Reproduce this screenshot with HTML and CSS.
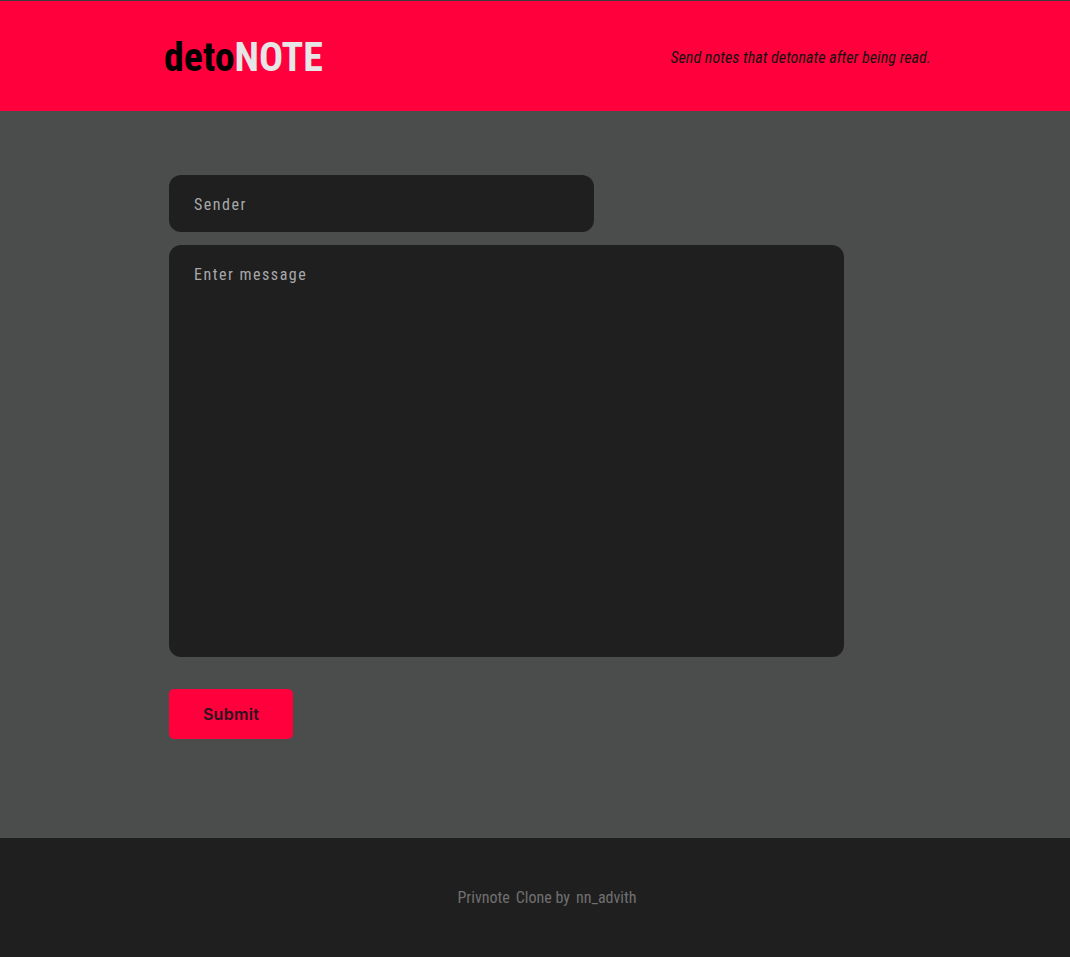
FILE: index.html
```html
<!DOCTYPE html>
<html>
<head>
<meta charset="utf-8">
<link rel="stylesheet" href="styles.css">
</head>
<body>
<header class="header">
  <div class="logo"><span class="logo-a">deto</span><span class="logo-b">NOTE</span></div>
  <div class="tagline">Send notes that detonate after being read.</div>
</header>
<main class="main">
  <form class="form">
    <input class="sender" type="text" placeholder="Sender">
    <textarea class="message" placeholder="Enter message"></textarea>
    <button class="submit" type="button">Submit</button>
  </form>
</main>
<footer class="footer">
  <span>Privnote</span><span>Clone by</span><span>nn_advith</span>
</footer>
</body>
</html>
```

FILE: styles.css
```css
* { box-sizing: border-box; }
html, body { margin: 0; padding: 0; }
body {
  font-family: "Roboto Condensed", "Liberation Sans Narrow", Roboto, sans-serif;
  background: #4b4d4c;
  border-top: 1px solid #3a3c3d;
}
.header {
  background: #ff003c;
  height: 110px;
  display: flex;
  align-items: center;
  justify-content: space-between;
  padding: 0 139px 0 164px;
}
.logo {
  font-weight: 700;
  font-size: 40px;
  letter-spacing: 0;
  margin-top: 2px;
}
.logo-a { color: #000; }
.logo-b { color: #e6e6e6; }
.tagline {
  font-style: italic;
  font-size: 16px;
  letter-spacing: 0.05px;
  color: #111;
  margin-top: 3px;
}
.main {
  height: 727px;
  padding: 64px 0 0 169px;
}
.form { display: flex; flex-direction: column; align-items: flex-start; }
.sender, .message {
  background: #1f1f1f;
  border: none;
  border-radius: 12px;
  color: #ddd;
  font-family: inherit;
  font-size: 16px;
  letter-spacing: 1.5px;
  outline: none;
  padding: 0 25px;
}
.sender::placeholder, .message::placeholder { color: #a8a8ab; }
.sender { width: 425px; height: 57px; padding-top: 2px; }
.message {
  width: 675px;
  height: 412px;
  margin-top: 13px;
  padding-top: 20px;
  resize: none;
}
.submit {
  margin-top: 32px;
  width: 124px;
  height: 50px;
  background: #ff003c;
  border: none;
  border-radius: 5px;
  font-family: Inter, "Open Sans", sans-serif;
  font-weight: 600;
  font-size: 16px;
  letter-spacing: 0.3px;
  color: #2a1420;
}
.footer {
  background: #1f1f1f;
  height: 119px;
  display: flex;
  justify-content: center;
  align-items: center;
  gap: 6px;
  color: #707070;
  font-size: 16px;
  padding: 0 0 0 24px;
}
```
